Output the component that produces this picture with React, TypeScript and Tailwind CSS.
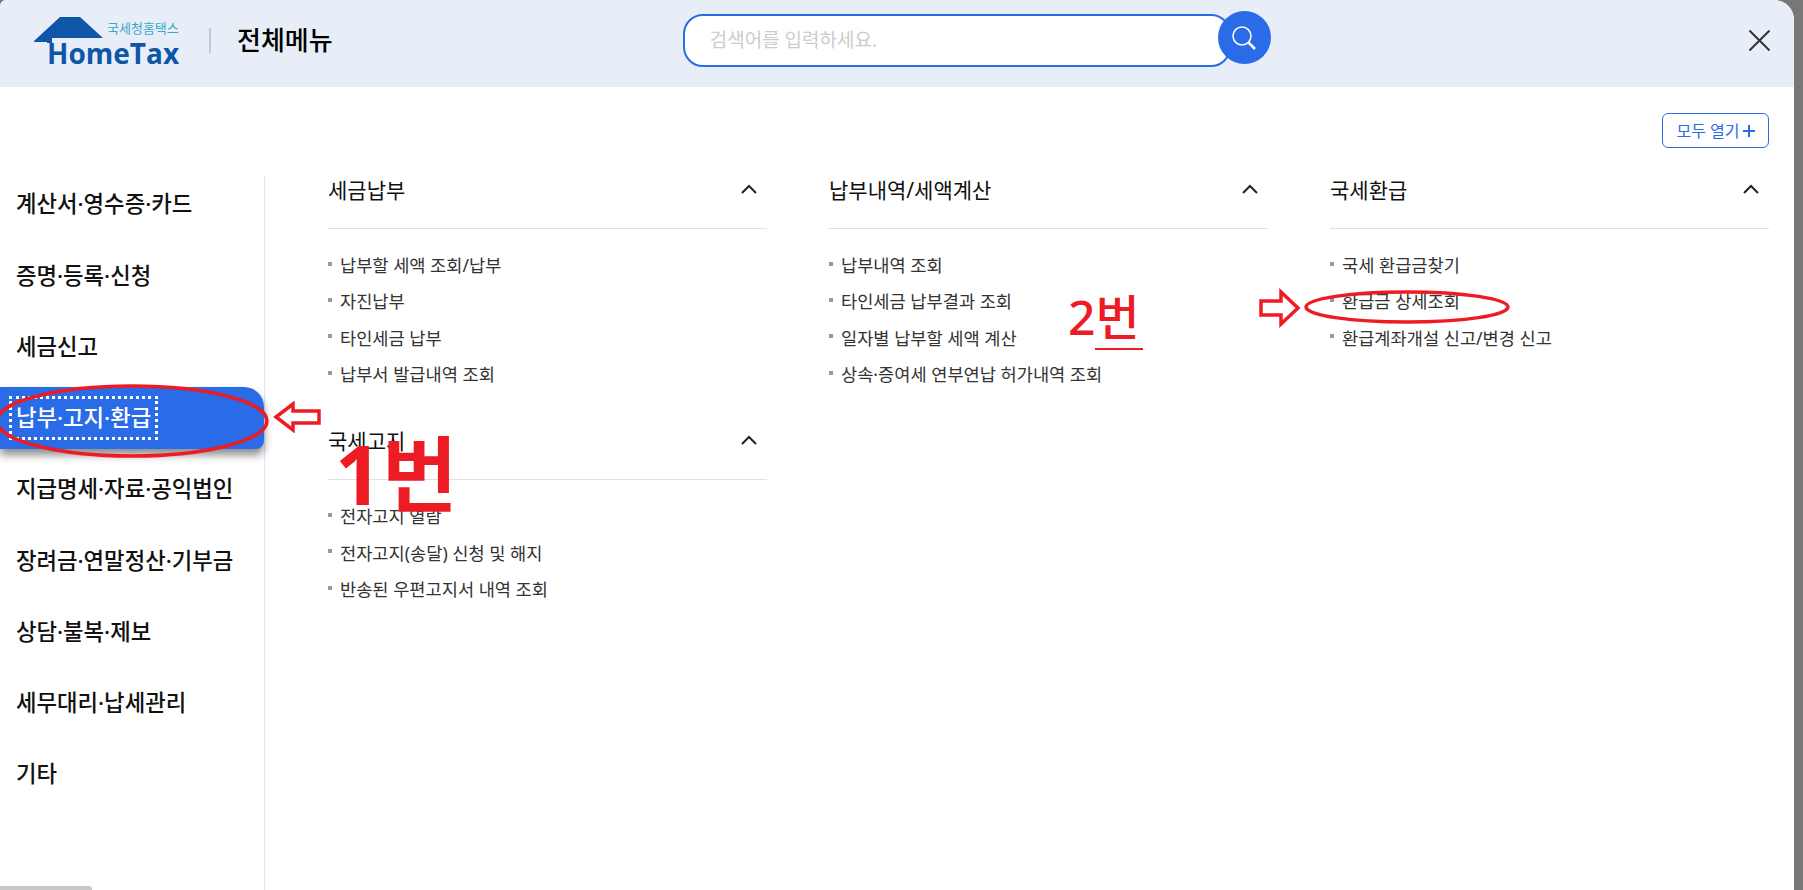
import React from 'react'

const sideMenus = [
  '계산서·영수증·카드',
  '증명·등록·신청',
  '세금신고',
  '납부·고지·환급',
  '지급명세·자료·공익법인',
  '장려금·연말정산·기부금',
  '상담·불복·제보',
  '세무대리·납세관리',
  '기타',
]

const columns = [
  [
    { title: '세금납부', items: ['납부할 세액 조회/납부', '자진납부', '타인세금 납부', '납부서 발급내역 조회'] },
    { title: '국세고지', items: ['전자고지 열람', '전자고지(송달) 신청 및 해지', '반송된 우편고지서 내역 조회'] },
  ],
  [
    {
      title: '납부내역/세액계산',
      items: ['납부내역 조회', '타인세금 납부결과 조회', '일자별 납부할 세액 계산', '상속·증여세 연부연납 허가내역 조회'],
    },
  ],
  [{ title: '국세환급', items: ['국세 환급금찾기', '환급금 상세조회', '환급계좌개설 신고/변경 신고'] }],
]

function Section({ title, items }: { title: string; items: string[] }) {
  return (
    <div className="mb-[34px]">
      <div className="flex h-[54px] items-start justify-between border-b border-[#dfdfe6]">
        <span className="text-[21px] leading-[30px] text-[#111]">{title}</span>
        <svg width="16" height="10" viewBox="0 0 16 10" className="mt-[9px] mr-[10px]" fill="none" stroke="#222" strokeWidth="2">
          <path d="M1 9 L8 2 L15 9" />
        </svg>
      </div>
      <ul className="mt-[18px]">
        {items.map((item) => (
          <li key={item} className="flex h-[36.33px] items-center text-[17.6px] text-[#333]">
            <span className="mr-[8px] mb-[3px] h-[4px] w-[4px] bg-[#999]" />
            {item}
          </li>
        ))}
      </ul>
    </div>
  )
}

export default function App() {
  return (
    <div
      className="relative h-[890px] w-full overflow-hidden bg-[#777]"
      style={{ fontFamily: '"Noto Sans", "Noto Sans CJK KR", sans-serif' }}
    >
      <div className="h-full w-[1794px] overflow-hidden rounded-tl-[6px] rounded-tr-[20px] bg-white">
        {/* Header */}
        <header className="flex h-[87px] items-center bg-[#e7eef8] pl-[34px]">
          <div className="relative h-[50px] w-[146px] shrink-0">
            <svg width="70" height="26" viewBox="0 0 70 26" className="absolute top-[-2px] left-0" fill="#0f56a8">
              <path d="M0 24 L26 0 H46 L69 21 H18 V26 H13 V25 H0 Z" />
            </svg>
            <span className="absolute top-[1px] left-[73px] text-[13px] leading-[16px] whitespace-nowrap text-[#3aa9c9]">
              국세청홈택스
            </span>
            <span
              className="absolute top-[19px] left-[13px] text-[28px] leading-[30px] font-bold text-[#0f56a8]"
              style={{ fontFamily: '"Open Sans", sans-serif' }}
            >
              HomeTax
            </span>
          </div>
          <div className="ml-[29px] -mt-[6px] h-[25px] w-[2px] bg-[#c5c8ce]" />
          <h1 className="ml-[26px] -mt-[6px] text-[26px] font-medium text-black">전체메뉴</h1>

          <div className="ml-[350px] -mt-[7px] flex items-center">
            <div className="flex h-[53px] w-[548px] items-center rounded-[20px] border-2 border-[#2a6be8] bg-white pl-[25px] text-[19px] text-[#ccc]">
              검색어를 입력하세요.
            </div>
            <button className="-ml-[13px] -mt-[5px] flex h-[53px] w-[53px] items-center justify-center rounded-full bg-[#2a6be8]">
              <svg width="26" height="26" viewBox="0 0 26 26" fill="none" stroke="#fff">
                <circle cx="11" cy="11" r="9" strokeWidth="1.5" />
                <path d="M17.5 17.5 L24 24" strokeWidth="2.5" />
              </svg>
            </button>
          </div>

          <button className="ml-auto mr-[24px] -mt-[7px]">
            <svg width="21" height="21" viewBox="0 0 21 21" fill="none" stroke="#333" strokeWidth="2" className="block">
              <path d="M0.5 0.5 L20.5 20.5 M20.5 0.5 L0.5 20.5" />
            </svg>
          </button>
        </header>

        {/* Open all */}
        <div className="flex h-[88px] justify-end pt-[26px] pr-[25px]">
          <button className="flex h-[35px] w-[107px] items-center justify-center gap-[3px] rounded-[6px] border border-[#2a6be8] bg-white text-[16px] text-[#2a6be8]">
            모두 열기
            <svg width="12" height="12" viewBox="0 0 12 12" stroke="#2a6be8" strokeWidth="2">
              <path d="M0 6 H12 M6 0 V12" />
            </svg>
          </button>
        </div>

        {/* Body */}
        <div className="flex h-[715px]">
          <nav className="w-[265px] shrink-0 border-r border-[#e2e2f8]">
            <ul className="-mt-[2px] flex flex-col gap-[9.25px]">
              {sideMenus.map((menu) => {
                const active = menu === '납부·고지·환급'
                return (
                  <li
                    key={menu}
                    className={
                      active
                        ? 'flex h-[62px] items-center rounded-tr-[20px] rounded-br-[8px] bg-[#2a6be8] pl-[16px] text-[22.3px] font-medium text-white shadow-[0_6px_8px_rgba(0,0,0,0.45)]'
                        : 'flex h-[62px] items-center pl-[16px] text-[22.3px] font-medium text-[#111]'
                    }
                  >
                    <span className={active ? 'leading-[30px] outline-[3px] outline-offset-[4px] outline-dotted outline-white' : ''}>{menu}</span>
                  </li>
                )
              })}
            </ul>
          </nav>

          <div className="flex gap-[62px] pl-[63px]">
            {columns.map((sections, i) => (
              <div key={i} className="w-[439px]">
                {sections.map((s) => (
                  <Section key={s.title} title={s.title} items={s.items} />
                ))}
              </div>
            ))}
          </div>
        </div>
      </div>

      {/* Red annotations drawn over the capture */}
      <svg width="290" height="90" viewBox="0 0 290 90" className="absolute top-[378px] left-0" fill="none" stroke="#ed1c24" strokeWidth="3.5">
        <ellipse cx="132" cy="43" rx="135" ry="35" />
      </svg>
      <svg width="50" height="32" viewBox="0 0 50 32" className="absolute top-[401px] left-[273px]" fill="#fff" stroke="#ed1c24" strokeWidth="3.5">
        <path d="M3 16 L20 3 V10 H46 V22 H20 V29 Z" />
      </svg>
      <span className="absolute top-[413px] left-[335px] text-[82px] leading-[120px] font-bold text-[#ed1c24]">1번</span>

      <span className="absolute top-[285px] left-[1068px] text-[48px] leading-[64px] font-medium text-[#ed1c24]">2번</span>
      <div className="absolute top-[348px] left-[1095px] h-[2px] w-[48px] bg-[#ed1c24]" />
      <svg width="44" height="40" viewBox="0 0 44 40" className="absolute top-[288px] left-[1259px]" fill="#fff" stroke="#ed1c24" strokeWidth="3.5">
        <path d="M39 20 L22 4 V13 H2 V27 H22 V36 Z" />
      </svg>
      <svg width="210" height="40" viewBox="0 0 210 40" className="absolute top-[287px] left-[1302px]" fill="none" stroke="#ed1c24" strokeWidth="3.5">
        <ellipse cx="105" cy="20" rx="101" ry="15" />
      </svg>

      {/* leftover scrollbar at the bottom edge */}
      <div className="absolute bottom-0 left-0 h-[4px] w-[92px] rounded-tr-[3px] bg-[#c8c8c8]" />
    </div>
  )
}
